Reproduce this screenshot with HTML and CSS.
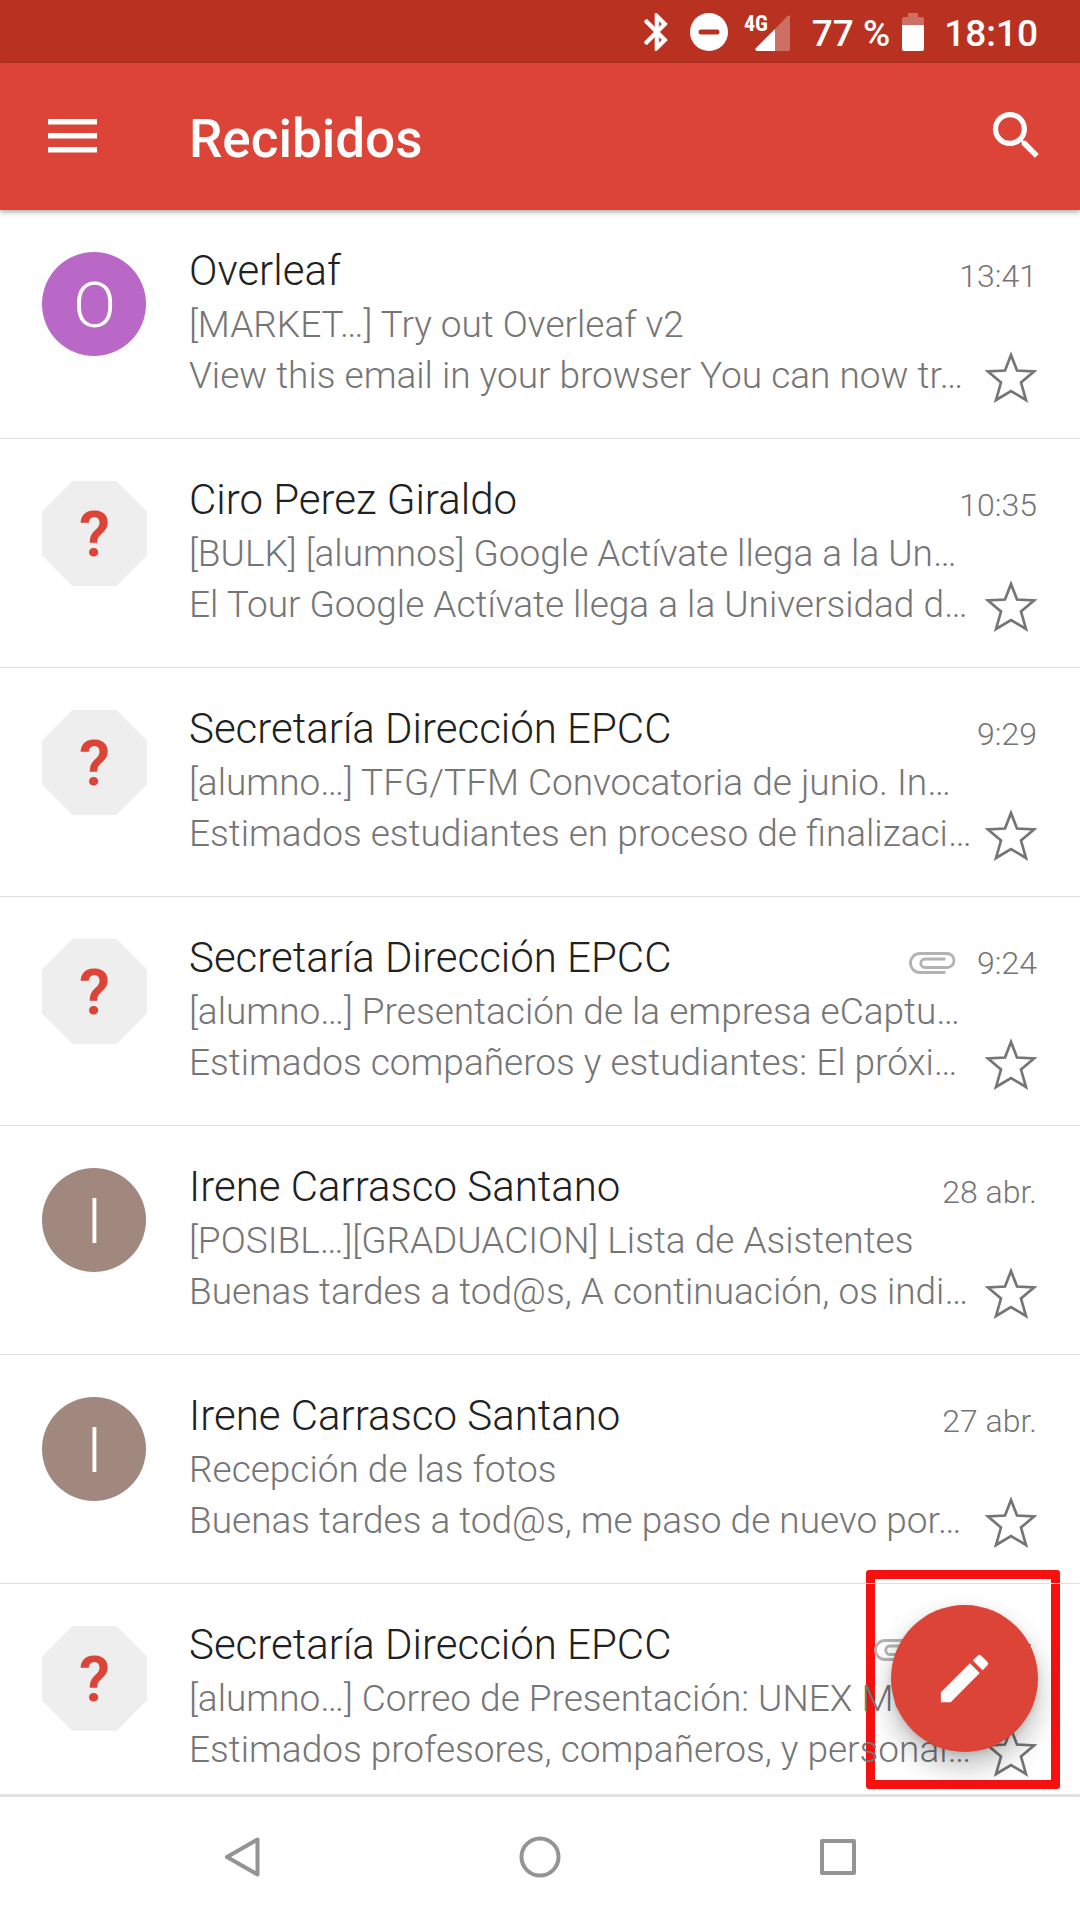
FILE: index.html
```html
<!DOCTYPE html>
<html lang="es">
<head>
<meta charset="utf-8">
<meta name="viewport" content="width=device-width, initial-scale=1">
<title>Recibidos</title>
<link rel="stylesheet" href="styles.css">
</head>
<body>
<svg class="sprite" aria-hidden="true">
  <symbol id="star" viewBox="0 0 52 52">
    <path d="M26 4 L32 19.5 L49 20.500 L36 31.5 L41 49 L26 40 L11 49 L16 31.500 L3 20.500 L20 19.500 Z" fill="none" stroke="currentColor" stroke-width="2.700"/>
  </symbol>
  <symbol id="clip" viewBox="0 0 47 22">
    <path d="M36.500 20.500H11A9.500 9.500 0 0 1 11 1.500H38A7 7 0 0 1 38 15.500H16A4.250 4.250 0 0 1 16 7H36.500" fill="none" stroke="currentColor" stroke-width="2.800"/>
  </symbol>
</svg>

<div class="status">
  <svg class="bluetooth" viewBox="5 2 13 20" aria-hidden="true"><path fill="currentColor" stroke="currentColor" stroke-width=".4" stroke-linejoin="round" d="M17.710 7.710 12 2h-1v7.590L6.410 5 5 6.410 10.590 12 5 17.590 6.410 19 11 14.410V22h1l5.710-5.710-4.300-4.290zM13 5.830l1.880 1.880L13 9.590zm1.880 10.460L13 18.170v-3.760z"/></svg>
  <svg class="dnd" viewBox="0 0 38 38" aria-hidden="true"><circle cx="19" cy="19" r="19" fill="currentColor"/><rect class="dnd-bar" x="8.500" y="16.500" width="21" height="5" rx="2.500"/></svg>
  <svg class="signal" viewBox="0 0 46 38" aria-hidden="true"><text class="net" x="0" y="18">4G</text><path d="M46 4V36q0 2-2 2H31V16L43 3.500Q46 1.500 46 4Z" fill="currentColor" opacity=".3"/><path d="M31 16V38H13q-3-1-1-3Z" fill="currentColor"/></svg>
  <span class="percent">77 %</span>
  <svg class="battery" viewBox="0 0 22 38" aria-hidden="true"><path d="M6 0H16V4H20Q22 4 22 6V12H0V6Q0 4 2 4H6Z" fill="currentColor" opacity=".3"/><path d="M0 12H22V36Q22 38 20 38H2Q0 38 0 36Z" fill="currentColor"/></svg>
  <span class="clock">18:10</span>
</div>

<header class="appbar">
  <button class="icon-button menu" aria-label="Abrir menú"><svg viewBox="0 0 49 34" aria-hidden="true"><path d="M0 0H49V5.500H0ZM0 14H49V19.500H0ZM0 28H49V33.500H0Z" fill="currentColor"/></svg></button>
  <h1 class="title">Recibidos</h1>
  <button class="icon-button search" aria-label="Buscar"><svg viewBox="0 0 24 24" aria-hidden="true"><path fill="currentColor" d="M15.500 14h-.790l-.280-.270C15.410 12.590 16 11.110 16 9.500 16 5.910 13.090 3 9.500 3S3 5.910 3 9.500 5.910 16 9.500 16c1.610 0 3.090-.590 4.230-1.570l.270.280v.790l5 4.990L20.490 19l-4.990-5zm-6 0C7.010 14 5 11.990 5 9.500S7.010 5 9.500 5 14 7.010 14 9.500 11.990 14 9.500 14z"/></svg></button>
</header>

<main class="inbox">
  <div class="highlight"></div>
  <ul class="list">
    <li class="mail">
      <div class="avatar purple">O</div>
      <div class="body">
        <div class="top"><h2 class="sender">Overleaf</h2><time class="time">13:41</time></div>
        <div class="bottom">
          <div class="lines"><p>[MARKET…] Try out Overleaf v2</p><p>View this email in your browser You can now tr…</p></div>
          <button class="star" aria-label="Destacar"><svg aria-hidden="true"><use href="#star"/></svg></button>
        </div>
      </div>
    </li>
    <li class="mail">
      <div class="avatar unknown">?</div>
      <div class="body">
        <div class="top"><h2 class="sender">Ciro Perez Giraldo</h2><time class="time">10:35</time></div>
        <div class="bottom">
          <div class="lines"><p>[BULK] [alumnos] Google Actívate llega a la Un…</p><p>El Tour Google Actívate llega a la Universidad d…</p></div>
          <button class="star" aria-label="Destacar"><svg aria-hidden="true"><use href="#star"/></svg></button>
        </div>
      </div>
    </li>
    <li class="mail">
      <div class="avatar unknown">?</div>
      <div class="body">
        <div class="top"><h2 class="sender">Secretaría Dirección EPCC</h2><time class="time">9:29</time></div>
        <div class="bottom">
          <div class="lines"><p>[alumno…] TFG/TFM Convocatoria de junio. In…</p><p>Estimados estudiantes en proceso de finalizaci…</p></div>
          <button class="star" aria-label="Destacar"><svg aria-hidden="true"><use href="#star"/></svg></button>
        </div>
      </div>
    </li>
    <li class="mail">
      <div class="avatar unknown">?</div>
      <div class="body">
        <div class="top"><h2 class="sender">Secretaría Dirección EPCC</h2><svg class="clip" aria-hidden="true"><use href="#clip"/></svg><time class="time">9:24</time></div>
        <div class="bottom">
          <div class="lines"><p>[alumno…] Presentación de la empresa eCaptu…</p><p>Estimados compañeros y estudiantes: El próxi…</p></div>
          <button class="star" aria-label="Destacar"><svg aria-hidden="true"><use href="#star"/></svg></button>
        </div>
      </div>
    </li>
    <li class="mail">
      <div class="avatar brown">I</div>
      <div class="body">
        <div class="top"><h2 class="sender">Irene Carrasco Santano</h2><time class="time">28 abr.</time></div>
        <div class="bottom">
          <div class="lines"><p>[POSIBL…][GRADUACION] Lista de Asistentes</p><p>Buenas tardes a tod@s, A continuación, os indi…</p></div>
          <button class="star" aria-label="Destacar"><svg aria-hidden="true"><use href="#star"/></svg></button>
        </div>
      </div>
    </li>
    <li class="mail">
      <div class="avatar brown">I</div>
      <div class="body">
        <div class="top"><h2 class="sender">Irene Carrasco Santano</h2><time class="time">27 abr.</time></div>
        <div class="bottom">
          <div class="lines"><p>Recepción de las fotos</p><p>Buenas tardes a tod@s, me paso de nuevo por…</p></div>
          <button class="star" aria-label="Destacar"><svg aria-hidden="true"><use href="#star"/></svg></button>
        </div>
      </div>
    </li>
    <li class="mail">
      <div class="avatar unknown">?</div>
      <div class="body">
        <div class="top"><h2 class="sender">Secretaría Dirección EPCC</h2><svg class="clip" aria-hidden="true"><use href="#clip"/></svg><time class="time">27 abr.</time></div>
        <div class="bottom">
          <div class="lines"><p>[alumno…] Correo de Presentación: UNEX Mo…</p><p>Estimados profesores, compañeros, y personal…</p></div>
          <button class="star" aria-label="Destacar"><svg aria-hidden="true"><use href="#star"/></svg></button>
        </div>
      </div>
    </li>
  </ul>
  <button class="compose" aria-label="Redactar"><svg viewBox="0 0 24 24" aria-hidden="true"><path fill="currentColor" d="M3 17.250V21h3.750L17.810 9.940l-3.750-3.750zM20.710 7.040a.996.996 0 0 0 0-1.410l-2.340-2.340a.996.996 0 0 0-1.410 0l-1.830 1.830 3.750 3.750z"/></svg></button>
</main>

<nav class="navbar">
  <button aria-label="Atrás"><svg viewBox="0 0 42 42" aria-hidden="true"><path d="M36.500 3.500V38.500L6 21Z"/></svg></button>
  <button aria-label="Inicio"><svg viewBox="0 0 42 42" aria-hidden="true"><circle cx="21" cy="21" r="18.500"/></svg></button>
  <button aria-label="Recientes"><svg viewBox="0 0 42 42" aria-hidden="true"><rect x="5" y="5" width="32" height="32"/></svg></button>
</nav>
</body>
</html>
```
FILE: styles.css
```css
* {
  box-sizing: border-box;
}

body {
  margin: 0;
  height: 100vh;
  display: flex;
  flex-direction: column;
  background: #fff;
  font-family: Roboto, "Noto Sans", sans-serif;
  font-weight: 300;
}

h1, h2, p, ul {
  margin: 0;
  padding: 0;
}

button {
  padding: 0;
  border: 0;
  background: none;
  color: inherit;
  cursor: pointer;
}

svg {
  display: block;
}

.sprite {
  position: absolute;
  width: 0;
  height: 0;
}

/* System status bar */
.status {
  flex: none;
  display: flex;
  align-items: center;
  justify-content: flex-end;
  height: 63px;
  padding-right: 42px;
  background: #b93221;
  color: #fff;
  font-size: 37px;
  line-height: 63px;
  font-weight: 500;
}

.bluetooth {
  width: 24px;
  height: 38px;
  margin-right: 22px;
}

.dnd {
  width: 38px;
  height: 38px;
  margin-right: 16px;
}

.dnd-bar {
  fill: #b93221;
}

.signal {
  width: 46px;
  height: 38px;
  margin-right: 22px;
  overflow: visible;
}

.net {
  fill: currentColor;
  font: 700 22px "Roboto Condensed", "Liberation Sans Narrow", Roboto, sans-serif;
}

.percent {
  padding-top: 3px;
}

.battery {
  width: 22px;
  height: 38px;
  margin: 0 20px 0 12px;
}

.clock {
  padding-top: 3px;
}

/* App bar */
.appbar {
  position: relative;
  z-index: 2;
  flex: none;
  display: flex;
  align-items: center;
  height: 147px;
  padding: 0 32px 2px 48px;
  background: #db4437;
  color: #fff;
  box-shadow: 0 2px 5px rgba(0, 0, 0, 0.35);
}

.menu {
  width: 141px;
}

.menu svg {
  width: 49px;
  height: 34px;
}

.title {
  flex: 1;
  padding-top: 7px;
  font-size: 53px;
  line-height: 64px;
  font-weight: 500;
}

.search svg {
  width: 63px;
  height: 63px;
}

/* Message list */
.inbox {
  position: relative;
  flex: 1;
  min-height: 0;
}

.list {
  position: relative;
  height: 100%;
  overflow: hidden;
  list-style: none;
}

.mail {
  display: flex;
  gap: 42px;
  padding: 33px 43px 35px 42px;
  border-bottom: 1px solid #e0e0e0;
}

.avatar {
  flex: none;
  width: 105px;
  height: 105px;
  margin-top: 9px;
  color: #fff;
  font-size: 63px;
  line-height: 107px;
  text-align: center;
}

.purple,
.brown {
  clip-path: circle(52px at 52px 52px);
}

.purple {
  background: #ba68c8;
}

.brown {
  background: #a1887f;
}

.unknown {
  background: #eee;
  color: #db4437;
  font-weight: 600;
  clip-path: polygon(29% 0, 71% 0, 100% 29%, 100% 71%, 71% 100%, 29% 100%, 0 71%, 0 29%);
}

.body {
  flex: 1;
  min-width: 0;
}

.top {
  display: flex;
  align-items: flex-end;
  height: 56px;
}

.sender {
  flex: 1;
  color: #212121;
  font-size: 42px;
  line-height: 56px;
  font-weight: 300;
}

.clip {
  width: 47px;
  height: 22px;
  margin: 0 21px 12px 0;
  color: #b3b3b3;
}

.time {
  color: #757575;
  font-size: 32px;
  line-height: 46px;
}

.bottom {
  display: flex;
  align-items: flex-end;
}

.lines {
  flex: 1;
  min-width: 0;
  padding-bottom: 2px;
  color: #757575;
  font-size: 37px;
  line-height: 51px;
  white-space: nowrap;
}

.star {
  flex: none;
  color: #757575;
}

.star svg {
  width: 52px;
  height: 52px;
}

.highlight {
  position: absolute;
  right: 20px;
  bottom: 5px;
  width: 194px;
  height: 219px;
  border: 9px solid #f61111;
  border-radius: 3px;
}

.compose {
  position: absolute;
  right: 42px;
  bottom: 42px;
  display: grid;
  place-items: center;
  width: 147px;
  height: 147px;
  border-radius: 50%;
  background: #db4437;
  color: #fff;
  box-shadow: 0 14px 28px rgba(0, 0, 0, 0.26), 0 2px 6px rgba(0, 0, 0, 0.12);
}

.compose svg {
  width: 63px;
  height: 63px;
}

/* System navigation */
.navbar {
  flex: none;
  display: grid;
  grid-template-columns: repeat(3, 1fr);
  place-items: center;
  height: 126px;
  padding: 0 93px 3px;
  border-top: 3px solid #e0e0e0;
  background: #fff;
}

.navbar svg {
  width: 42px;
  height: 42px;
  fill: none;
  stroke: #949494;
  stroke-width: 4;
  stroke-linejoin: round;
}
```
